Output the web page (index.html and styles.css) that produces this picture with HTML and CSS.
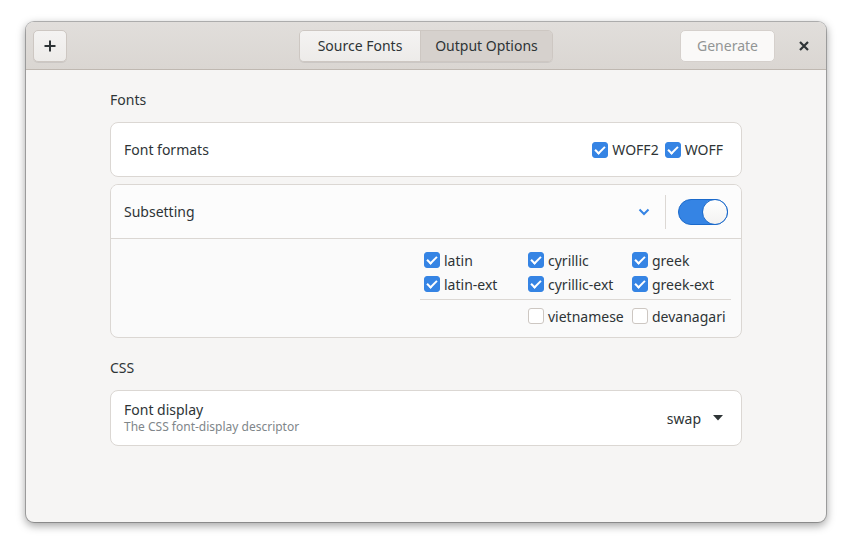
FILE: index.html
```html
<!DOCTYPE html>
<html>
<head>
<meta charset="utf-8">
<link rel="stylesheet" href="styles.css">
</head>
<body>
<div class="window">
  <header class="headerbar">
    <div class="start">
      <button class="btn icon-btn" aria-label="Add">
        <svg width="14" height="14" viewBox="0 0 14 14"><path d="M7 1.5v11M1.5 7h11" stroke="#2e3436" stroke-width="2" fill="none"/></svg>
      </button>
    </div>
    <div class="segmented">
      <button class="seg">Source Fonts</button>
      <button class="seg active">Output Options</button>
    </div>
    <div class="end">
      <button class="btn generate" disabled>Generate</button>
      <button class="close" aria-label="Close">
        <svg width="12" height="12" viewBox="0 0 12 12"><path d="M2 2l8 8M10 2l-8 8" stroke="#2e3436" stroke-width="2.2" fill="none"/></svg>
      </button>
    </div>
  </header>
  <main class="content">
    <div class="column">
      <h2 class="section">Fonts</h2>
      <div class="card row first">
        <span class="title">Font formats</span>
        <div class="checks">
          <label class="check"><span class="box on"></span>WOFF2</label>
          <label class="check"><span class="box on"></span>WOFF</label>
        </div>
      </div>
      <div class="card expander">
        <div class="row exp-head">
          <span class="title">Subsetting</span>
          <div class="exp-tools">
            <svg class="chev" width="12" height="8" viewBox="0 0 12 8"><path d="M1.5 1.5L6 6l4.5-4.5" stroke="#3584e4" stroke-width="2" fill="none"/></svg>
            <span class="vsep"></span>
            <span class="switch"><span class="knob"></span></span>
          </div>
        </div>
        <div class="exp-body">
          <div class="subsets">
            <div class="grid">
              <label class="check"><span class="box on"></span>latin</label>
              <label class="check"><span class="box on"></span>cyrillic</label>
              <label class="check"><span class="box on"></span>greek</label>
              <label class="check"><span class="box on"></span>latin-ext</label>
              <label class="check"><span class="box on"></span>cyrillic-ext</label>
              <label class="check"><span class="box on"></span>greek-ext</label>
            </div>
            <div class="hsep"></div>
            <div class="grid">
              <span></span>
              <label class="check"><span class="box"></span>vietnamese</label>
              <label class="check"><span class="box"></span>devanagari</label>
            </div>
          </div>
        </div>
      </div>
      <h2 class="section css">CSS</h2>
      <div class="card row tall">
        <div class="titles">
          <span class="title">Font display</span>
          <span class="subtitle">The CSS font-display descriptor</span>
        </div>
        <div class="dropdown">
          <span>swap</span>
          <svg width="10" height="6" viewBox="0 0 10 6"><path d="M0 0h10L5 5.5z" fill="#2e3436"/></svg>
        </div>
      </div>
    </div>
  </main>
</div>
</body>
</html>
```

FILE: styles.css
```css
* { box-sizing: border-box; }
html, body { margin: 0; padding: 0; }
body {
  width: 852px;
  height: 552px;
  background: #ffffff;
  font-family: "Noto Sans", "Open Sans", sans-serif;
  font-size: 14px;
  color: #2e3436;
  padding: 22px 26px;
}
.window {
  width: 800px;
  height: 500px;
  border-radius: 8px;
  background: #f6f5f4;
  box-shadow: 0 3px 9px 1px rgba(0,0,0,0.35), 0 0 0 1px rgba(0,0,0,0.25);
  overflow: hidden;
  display: flex;
  flex-direction: column;
}
.headerbar {
  height: 48px;
  flex: none;
  display: grid;
  grid-template-columns: 1fr auto 1fr;
  align-items: center;
  padding: 0 7px;
  background: linear-gradient(#e1dedb, #dad6d2);
  border-bottom: 1px solid #bfb8b1;
}
.start { display: flex; }
.end { display: flex; justify-content: flex-end; align-items: center; }
button { font: inherit; color: inherit; }
.btn {
  height: 32px;
  border: 1px solid #cdc7c2;
  border-radius: 5px;
  background: linear-gradient(#f4f3f2, #edebe9);
  box-shadow: 0 1px rgba(0,0,0,0.07);
  padding: 0 16px;
}
.icon-btn {
  width: 34px;
  padding: 0;
  display: flex;
  align-items: center;
  justify-content: center;
}
.segmented {
  display: flex;
  height: 32px;
  border: 1px solid #cdc7c2;
  border-radius: 5px;
  overflow: hidden;
  box-shadow: 0 1px rgba(0,0,0,0.07);
}
.seg {
  border: none;
  background: linear-gradient(#f4f3f2, #edebe9);
  padding: 0;
  width: 120px;
  height: 100%;
  font-size: 14px;
  color: #2e3436;
}
.seg.active {
  width: 132px;
  background: #d6d1cd;
  border-left: 1px solid #cdc7c2;
}
.generate {
  width: 95px;
  padding: 0;
  background: #faf9f8;
  color: #929595;
  border-color: #d5d0cc;
  box-shadow: none;
}
.close {
  width: 34px;
  height: 32px;
  margin-left: 12px;
  margin-right: -2px;
  border: none;
  background: none;
  display: flex;
  align-items: center;
  justify-content: center;
  padding: 0;
}
.content {
  flex: 1;
  padding-top: 20px;
}
.column {
  width: 632px;
  margin: 0 auto;
}
.section {
  margin: 0 0 12px 0;
  font-size: 14px;
  font-weight: normal;
  line-height: 20px;
  height: 20px;
  color: #2e3436;
}
.section.css { margin-top: 20px; }
.card {
  background: #ffffff;
  border: 1px solid #dbd7d3;
  border-radius: 8px;
  margin-bottom: 8px;
}
.card.first { margin-bottom: 7px; }
.row {
  height: 55px;
  display: flex;
  align-items: center;
  justify-content: space-between;
  padding: 0 18px 0 13px;
}
.row.tall { height: 56px; padding-right: 18px; }
.title { font-size: 14px; }
.checks { display: flex; gap: 6px; }
.check {
  display: flex;
  align-items: center;
  gap: 4px;
  font-size: 14px;
  height: 24px;
  white-space: nowrap;
}
.box {
  width: 16px;
  height: 16px;
  border-radius: 3px;
  border: 1px solid #cdc7c2;
  background: #ffffff;
  flex: none;
  position: relative;
}
.box.on {
  background: #3584e4;
  border-color: #3584e4;
}
.box.on::after {
  content: "";
  position: absolute;
  left: 4px;
  top: 1px;
  width: 4px;
  height: 8px;
  border: solid #fff;
  border-width: 0 2.5px 2.5px 0;
  transform: rotate(45deg);
}
.expander { background: #fafafa; overflow: hidden; }
.exp-head {
  height: 54px;
  background: #fcfcfc;
  border-bottom: 1px solid #dbd7d3;
  padding-right: 13px;
}
.exp-tools { display: flex; align-items: center; }
.chev { margin-right: 15px; }
.vsep {
  width: 1px;
  height: 34px;
  background: #dcd8d4;
  margin-right: 12px;
}
.switch {
  width: 50px;
  height: 26px;
  border-radius: 13px;
  background: #3584e4;
  border: 1px solid #1b6acb;
  position: relative;
}
.knob {
  position: absolute;
  right: -1px;
  top: -1px;
  width: 26px;
  height: 26px;
  border-radius: 50%;
  background: linear-gradient(#ffffff, #f3f2f1);
  border: 1px solid #1b6acb;
}
.exp-body {
  height: 98px;
  padding-top: 9px;
  display: flex;
  justify-content: flex-end;
  padding-right: 10px;
}
.subsets { width: 311px; }
.grid {
  display: grid;
  grid-template-columns: 104px 104px 103px;
  padding-left: 4px;
}
.hsep {
  height: 1px;
  background: #dcd8d4;
  margin: 3px 0 4px;
}
.titles { display: flex; flex-direction: column; }
.titles .title { line-height: 18px; }
.subtitle { font-size: 12px; color: #80868a; line-height: 16px; }
.dropdown { display: flex; align-items: center; gap: 12px; }
```
